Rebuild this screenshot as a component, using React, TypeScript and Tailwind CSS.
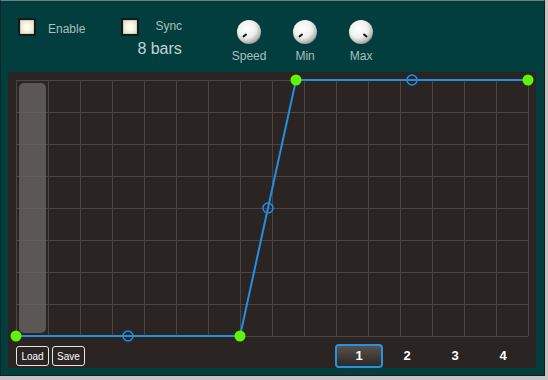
import React from 'react';

const LABEL = 'text-[#a9bebe] text-[12px]';
const FONT = { fontFamily: '"Liberation Sans", Arial, sans-serif' };

const Checkbox: React.FC = () => (
  <div className="w-[18px] h-[18px] border-2 border-[#141b1b] bg-[radial-gradient(circle,#fcfcef_25%,#d9d8bd_100%)] shadow-[inset_0_0_1px_#000]" />
);

const Knob: React.FC<{ dir: 'left' | 'right' }> = ({ dir }) => (
  <svg width="26" height="26" viewBox="0 0 26 26">
    <defs>
      <radialGradient id={`kg-${dir}`} cx="40%" cy="35%" r="70%">
        <stop offset="0%" stopColor="#ffffff" />
        <stop offset="55%" stopColor="#efefef" />
        <stop offset="85%" stopColor="#b8b8b8" />
        <stop offset="100%" stopColor="#7d8585" />
      </radialGradient>
    </defs>
    <circle cx="13" cy="13" r="12" fill={`url(#kg-${dir})`} />
    {dir === 'left' ? (
      <line x1="7.5" y1="17.5" x2="10" y2="15.5" stroke="#111" strokeWidth="2" strokeLinecap="round" />
    ) : (
      <line x1="18.5" y1="17.5" x2="16" y2="15.5" stroke="#111" strokeWidth="2" strokeLinecap="round" />
    )}
  </svg>
);

const GRID_X = 8;
const GRID_Y = 8;
const CELL = 32;

const Chart: React.FC = () => {
  const verticals = Array.from({ length: 17 }, (_, i) => GRID_X + i * CELL);
  const horizontals = Array.from({ length: 9 }, (_, i) => GRID_Y + i * CELL);
  const pts = [
    [8, 264],
    [232, 264],
    [288, 8],
    [520, 8],
  ];
  const mids = [
    [120, 264],
    [260, 136],
    [404, 8],
  ];
  return (
    <svg width="528" height="272" viewBox="0 0 528 272" className="block">
      {verticals.map((x) => (
        <line key={`v${x}`} x1={x + 0.5} y1={8} x2={x + 0.5} y2={264} stroke="#4b4644" strokeWidth="1" />
      ))}
      {horizontals.map((y) => (
        <line key={`h${y}`} x1={8} y1={y + 0.5} x2={520} y2={y + 0.5} stroke="#4b4644" strokeWidth="1" />
      ))}
      <rect x="11" y="11" width="27" height="250" rx="5" fill="#6b6866" opacity="0.75" />
      <polyline
        points={pts.map((p) => p.join(',')).join(' ')}
        fill="none"
        stroke="#2190e4"
        strokeWidth="2"
      />
      {mids.map(([x, y]) => (
        <circle key={`m${x}`} cx={x} cy={y} r="5" fill="none" stroke="#2190e4" strokeWidth="1.5" />
      ))}
      {pts.map(([x, y]) => (
        <circle key={`p${x}`} cx={x} cy={y} r="5.5" fill="#60f500" />
      ))}
    </svg>
  );
};

const App: React.FC = () => {
  return (
    <div className="w-[548px] h-[380px] bg-[#c4c4c4] overflow-hidden" style={FONT}>
      <div className="w-[545px] h-[376px] bg-[#033e3f] border-t border-t-[#6b8383] border-l border-l-[#0a2626] border-r border-r-[#1a1a1a] border-b border-b-[#1a1a1a] flex flex-col">
        {/* header controls */}
        <div className="h-[71px] flex items-start">
          <div className="ml-[17px] mt-[17px]">
            <Checkbox />
          </div>
          <div className={`ml-[12px] mt-[19px] ${LABEL}`}>Enable</div>
          <div className="ml-[36px] mt-[17px]">
            <Checkbox />
          </div>
          <div className="flex flex-col ml-[-2px]">
            <div className={`ml-[18px] mt-[17px] leading-[16px] ${LABEL}`}>Sync</div>
            <div className="mt-[7px] text-[16px] leading-[16px] text-[#c3d3d3]">8 bars</div>
          </div>
          <div className="flex ml-[39px] mt-[18px]">
            {[
              ['Speed', 'left'],
              ['Min', 'left'],
              ['Max', 'right'],
            ].map(([label, dir]) => (
              <div key={label} className="w-[56px] flex flex-col items-center">
                <Knob dir={dir as 'left' | 'right'} />
                <div className={`mt-[4px] leading-[14px] ${LABEL}`}>{label}</div>
              </div>
            ))}
          </div>
        </div>

        {/* editor panel */}
        <div className="ml-[7px] w-[528px] h-[296px] bg-[#2a2523] flex flex-col">
          <Chart />
          <div className="flex items-start justify-between pl-[8px] pr-[9px]">
            <div className="flex gap-[3px] mt-[2px]">
              {['Load', 'Save'].map((t) => (
                <div
                  key={t}
                  className="w-[33px] h-[20px] border border-[#e6e6e6] rounded-[3px] text-white text-[10px] flex items-center justify-center"
                >
                  {t}
                </div>
              ))}
            </div>
            <div className="flex">
              {['1', '2', '3', '4'].map((t, i) => (
                <div
                  key={t}
                  className={`w-[48px] h-[24px] flex items-center justify-center text-white text-[13px] font-bold ${
                    i === 0
                      ? 'border-2 border-[#2a91dd] rounded-[4px] bg-[linear-gradient(to_bottom,#55514f,#2c2826)]'
                      : ''
                  }`}
                >
                  {t}
                </div>
              ))}
            </div>
          </div>
        </div>
      </div>
    </div>
  );
};

export default App;
